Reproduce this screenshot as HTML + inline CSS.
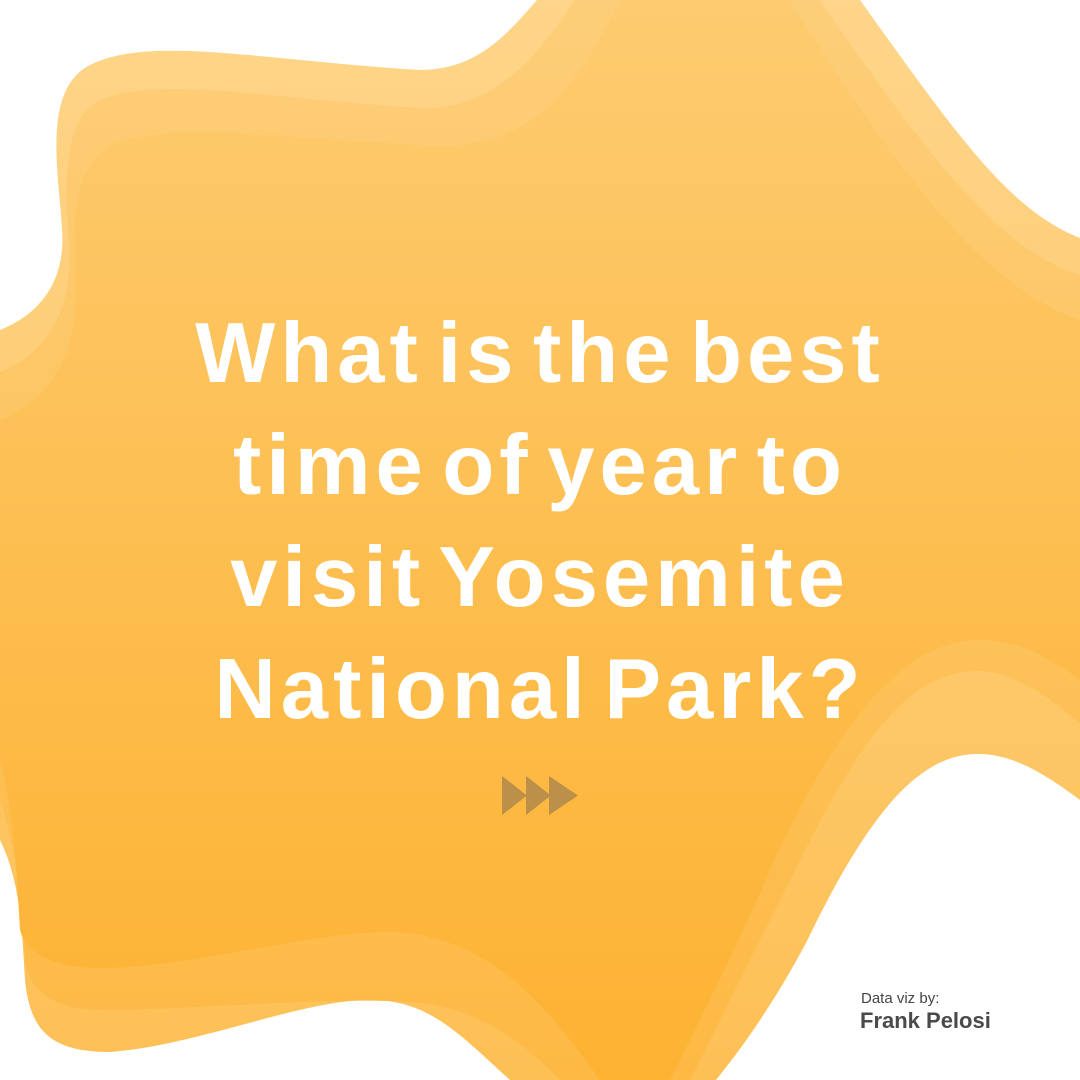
<!DOCTYPE html>
<html><head><meta charset="utf-8"><style>
html,body{margin:0;padding:0;width:1080px;height:1080px;overflow:hidden;background:#fff;}
svg{position:absolute;left:0;top:0}
.t{position:absolute;left:0;width:1080px;text-align:center;color:#fff;font-family:"Liberation Sans",sans-serif;font-weight:bold;font-size:85px;line-height:112px;top:298px;letter-spacing:5px;word-spacing:-14px}
.a1{position:absolute;left:861px;top:990px;font-family:"Liberation Sans",sans-serif;font-size:15px;color:#444}
.a2{position:absolute;left:860px;top:1008px;font-family:"Liberation Sans",sans-serif;font-size:22px;font-weight:bold;color:#4a4a4a}
</style></head><body>
<svg width="1080" height="1080" viewBox="0 0 1080 1080">
<defs>
<linearGradient id="ga" x1="0" y1="0" x2="0" y2="1"><stop offset="0" stop-color="#fed58a"/><stop offset="1" stop-color="#fdc055"/></linearGradient>
<linearGradient id="gb" x1="0" y1="0" x2="0" y2="1"><stop offset="0" stop-color="#fdce79"/><stop offset="1" stop-color="#fdb944"/></linearGradient>
<linearGradient id="gc" x1="0" y1="0" x2="0" y2="1"><stop offset="0" stop-color="#fdcb70"/><stop offset="1" stop-color="#fdb232"/></linearGradient>
</defs>
<path fill="url(#ga)" d="M537,0 L860,0 C960,140 1010,210 1080,238 L1080,800 C1040,770 1010,754 978,754 C920,754 870,810 806,943 C770,1010 740,1050 716,1080 L510,1080 C460,1035 430,1000 370,1000 C300,1000 200,1045 110,1052 C50,1052 30,1030 25,980 C22,930 20,880 0,840 L0,330 C50,310 65,270 62,230 C60,180 40,90 90,65 C150,35 260,60 420,70 C480,70 510,30 537,0 Z"/>
<path fill="url(#gb)" d="M575,0 L820,0 C930,160 1000,250 1080,275 L1080,723 C1040,690 1010,671 978,671 C900,671 850,760 790,880 C760,940 720,1020 690,1080 L560,1080 C520,1040 480,1010 420,1003 C340,995 200,1010 100,1010 C55,1010 28,990 25,960 C22,920 22,870 0,800 L0,372 C55,350 72,300 69,248 C66,190 60,120 100,100 C160,75 280,100 420,108 C500,110 540,50 575,0 Z"/>
<path fill="url(#gc)" d="M620,0 L790,0 C900,180 990,290 1080,320 L1080,680 C1040,650 1010,640 978,640 C890,640 820,760 770,870 C740,940 700,1020 670,1080 L600,1080 C550,1010 500,950 420,935 C350,920 200,968 100,968 C50,968 25,950 20,930 C17,880 15,820 0,760 L0,420 C60,395 78,340 75,290 C73,230 70,170 110,145 C170,120 300,140 440,146 C540,146 580,80 620,0 Z"/>
<g fill="#bb9048">
<polygon points="502,776 527,795.5 502,815"/>
<polygon points="526,776 551,795.5 526,815"/>
<polygon points="549,776 578,795.5 549,815"/>
</g>
</svg>
<div class="t">What is the best<br>time of year to<br>visit Yosemite<br>National Park?</div>
<div class="a1">Data viz by:</div>
<div class="a2">Frank Pelosi</div>
</body></html>
